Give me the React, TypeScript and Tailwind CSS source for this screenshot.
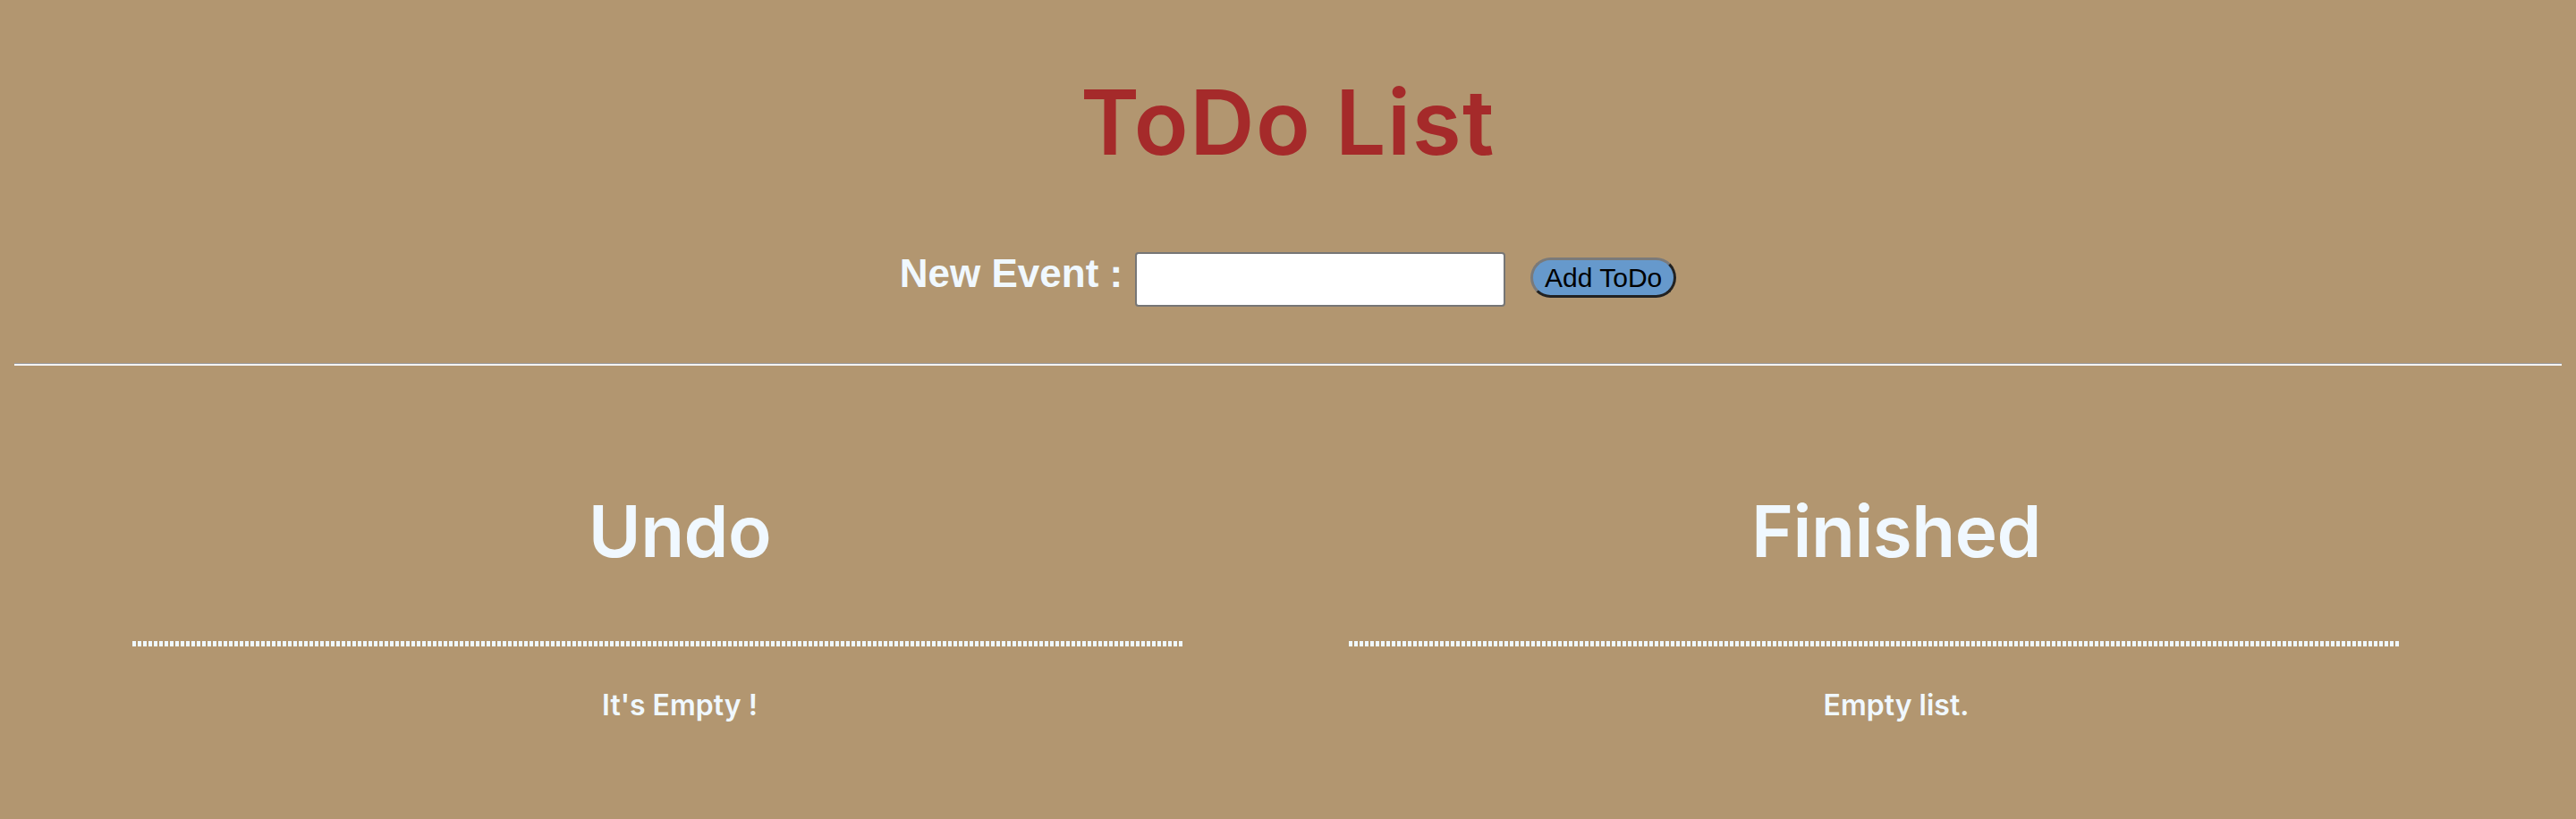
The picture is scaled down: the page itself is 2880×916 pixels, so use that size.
const columns = [
  { title: "Undo", empty: "It's Empty !" },
  { title: "Finished", empty: "Empty list." },
];

const App = () => {
  return (
    <div className="min-h-[916px] bg-[#b29670] pt-[87px] font-['Inter',sans-serif]">
      {/* Header */}
      <h1 className="text-center text-[100px] leading-none font-semibold tracking-[1.5px] text-[#a52a2a]">
        ToDo List
      </h1>

      {/* New event form */}
      <div className="mt-[95px] flex items-start justify-center">
        <label className="mt-[2px] mr-[14px] font-['Liberation_Sans',sans-serif] text-[44px] leading-none font-bold text-[#f0f8ff]">
          New Event :
        </label>
        <input
          type="text"
          className="h-[61px] w-[414px] rounded-[4px] border-2 border-[#767676] bg-white px-2 text-[30px] outline-none"
        />
        <button className="mt-[6px] ml-[28px] h-[45px] w-[163px] rounded-full border-[3px] border-t-[#7a7a7a] border-l-[#7a7a7a] border-r-[#222] border-b-[#222] bg-[#6699cc] font-['Liberation_Sans',sans-serif] text-[30px] leading-none text-black">
          Add ToDo
        </button>
      </div>

      {/* Divider */}
      <div className="mx-[16px] mt-[63px] border-t border-b-2 border-t-[#9a9a9a] border-b-[#f4f4f4]" />

      {/* Lists */}
      <div className="grid grid-cols-2 px-[80px]">
        {columns.map((col) => (
          <section key={col.title} className="flex flex-col">
            <h2 className="mt-[145px] text-center text-[80px] leading-none font-semibold tracking-[-0.5px] text-[#f0f8ff]">
              {col.title}
            </h2>
            <div className="mt-[83px] ml-[68px] h-[6px] w-[1174px] bg-[repeating-linear-gradient(90deg,#f0f8ff_0_4px,transparent_4px_6px)]" />
            <p className="mt-[50px] text-center text-[32px] leading-none font-semibold text-[#f0f8ff]">
              {col.empty}
            </p>
          </section>
        ))}
      </div>
    </div>
  );
};

export default App;
